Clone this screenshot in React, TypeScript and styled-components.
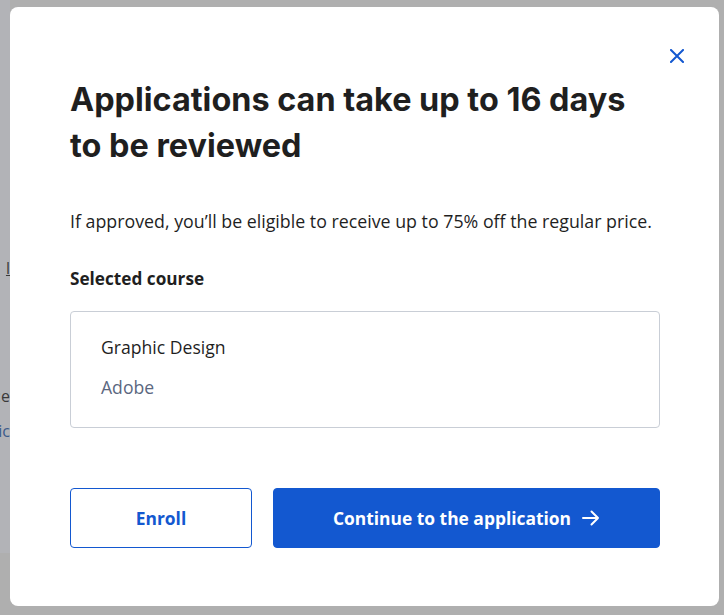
import React from "react";
import styled, { createGlobalStyle } from "styled-components";

const Global = createGlobalStyle`
  html, body { margin: 0; padding: 0; }
  body { background: #afafaf; font-family: "Open Sans", "Liberation Sans", sans-serif; }
  * { box-sizing: border-box; }
`;

const Page = styled.div`
  position: relative;
  width: 724px;
  height: 615px;
  overflow: hidden;
  background: #afafaf;
  display: flex;
  align-items: flex-start;
  padding: 7px 5px 0 10px;
`;

const BehindStrip = styled.div`
  position: absolute;
  left: 0;
  top: 0;
  width: 10px;
  height: 553px;
  background: #b2b3b7;
`;

const BehindText = styled.span<{ $top: number; $color?: string; $underline?: boolean }>`
  position: absolute;
  left: 0;
  width: 10px;
  overflow: hidden;
  direction: rtl;
  top: ${(p) => p.$top}px;
  font-family: "Open Sans", sans-serif;
  font-size: 16px;
  line-height: 20px;
  color: ${(p) => p.$color || "#3a3a3a"};
  text-decoration: ${(p) => (p.$underline ? "underline" : "none")};
  white-space: nowrap;
`;

const Modal = styled.div`
  position: relative;
  width: 709px;
  height: 599px;
  background: #ffffff;
  border-radius: 8px;
  padding: 70px 59px 58px 60px;
  display: flex;
  flex-direction: column;
`;

const CloseButton = styled.button`
  position: absolute;
  top: 38px;
  right: 31px;
  width: 22px;
  height: 22px;
  border: none;
  background: transparent;
  padding: 0;
  display: flex;
  align-items: center;
  justify-content: center;
  cursor: pointer;
`;

const Title = styled.h2`
  margin: 0;
  font-family: "Inter", sans-serif;
  font-weight: 700;
  font-size: 32.4px;
  line-height: 46px;
  color: #1f1f1f;
  max-width: 570px;
`;

const Lead = styled.p`
  margin: 38px 0 0;
  font-size: 17.8px;
  line-height: 28px;
  color: #1f1f1f;
`;

const Label = styled.div`
  margin-top: 32px;
  font-size: 17.2px;
  font-weight: 700;
  line-height: 24px;
  color: #1f1f1f;
`;

const CourseCard = styled.div`
  margin-top: 20px;
  border: 1px solid #c9ced6;
  border-radius: 4px;
  padding: 23px 30px 28px;
  display: flex;
  flex-direction: column;
  gap: 16px;
`;

const CourseLine = styled.div<{ $muted?: boolean }>`
  font-size: 17.6px;
  line-height: 24px;
  color: ${(p) => (p.$muted ? "#5b6780" : "#1f1f1f")};
`;

const Actions = styled.div`
  margin-top: 60px;
  display: grid;
  grid-template-columns: 182px 1fr;
  gap: 21px;
`;

const Button = styled.button<{ $primary?: boolean }>`
  height: 60px;
  border-radius: 4px;
  font-family: "Open Sans", sans-serif;
  font-weight: 700;
  font-size: 17.4px;
  display: flex;
  align-items: center;
  justify-content: center;
  gap: 11px;
  cursor: pointer;
  border: 1px solid #1358d0;
  background: ${(p) => (p.$primary ? "#1358d0" : "#ffffff")};
  color: ${(p) => (p.$primary ? "#ffffff" : "#1358d0")};
`;

export default function App() {
  return (
    <>
      <Global />
      <Page>
        <BehindStrip />
        <BehindText $top={258} $underline>l</BehindText>
        <BehindText $top={386}>e:</BehindText>
        <BehindText $top={421} $color="#3b5a8a">ic</BehindText>
        <Modal>
          <CloseButton aria-label="Close">
            <svg width="14" height="14" viewBox="0 0 14 14" fill="none">
              <path d="M1 1L13 13M13 1L1 13" stroke="#1358d0" strokeWidth="2" strokeLinecap="square" />
            </svg>
          </CloseButton>
          <Title>Applications can take up to 16 days to be reviewed</Title>
          <Lead>If approved, you’ll be eligible to receive up to 75% off the regular price.</Lead>
          <Label>Selected course</Label>
          <CourseCard>
            <CourseLine>Graphic Design</CourseLine>
            <CourseLine $muted>Adobe</CourseLine>
          </CourseCard>
          <Actions>
            <Button>Enroll</Button>
            <Button $primary>
              Continue to the application
              <svg width="18" height="16" viewBox="0 0 18 16" fill="none">
                <path d="M1 8H16M9.5 1.5L16 8L9.5 14.5" stroke="#ffffff" strokeWidth="2" strokeLinecap="round" strokeLinejoin="round" />
              </svg>
            </Button>
          </Actions>
        </Modal>
      </Page>
    </>
  );
}
